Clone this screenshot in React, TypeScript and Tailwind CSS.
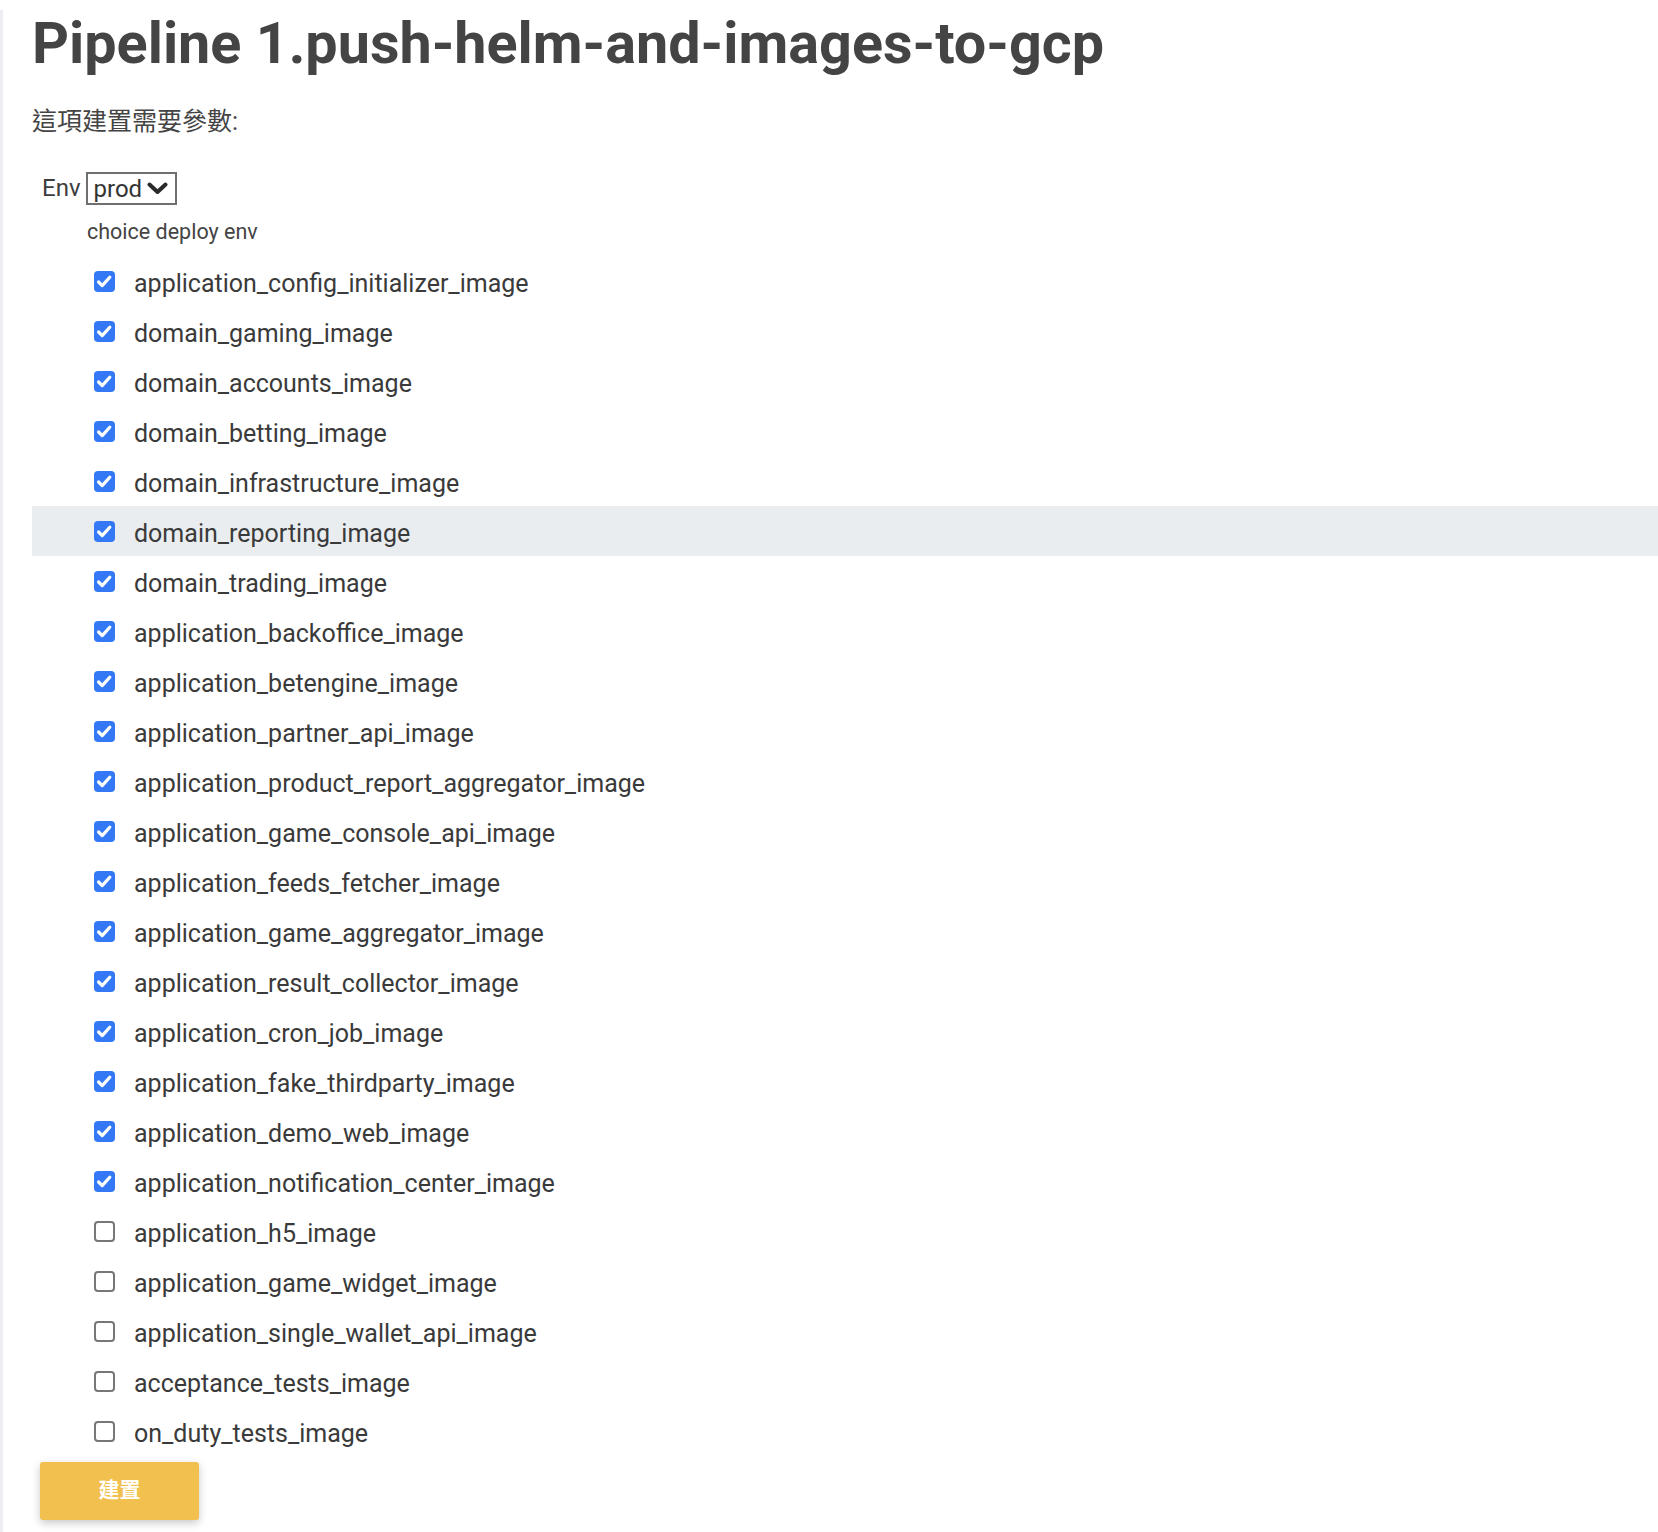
import React from 'react';

const items: { name: string; checked: boolean }[] = [
    { name: 'application_config_initializer_image', checked: true },
    { name: 'domain_gaming_image', checked: true },
    { name: 'domain_accounts_image', checked: true },
    { name: 'domain_betting_image', checked: true },
    { name: 'domain_infrastructure_image', checked: true },
    { name: 'domain_reporting_image', checked: true },
    { name: 'domain_trading_image', checked: true },
    { name: 'application_backoffice_image', checked: true },
    { name: 'application_betengine_image', checked: true },
    { name: 'application_partner_api_image', checked: true },
    { name: 'application_product_report_aggregator_image', checked: true },
    { name: 'application_game_console_api_image', checked: true },
    { name: 'application_feeds_fetcher_image', checked: true },
    { name: 'application_game_aggregator_image', checked: true },
    { name: 'application_result_collector_image', checked: true },
    { name: 'application_cron_job_image', checked: true },
    { name: 'application_fake_thirdparty_image', checked: true },
    { name: 'application_demo_web_image', checked: true },
    { name: 'application_notification_center_image', checked: true },
    { name: 'application_h5_image', checked: false },
    { name: 'application_game_widget_image', checked: false },
    { name: 'application_single_wallet_api_image', checked: false },
    { name: 'acceptance_tests_image', checked: false },
    { name: 'on_duty_tests_image', checked: false },
];

// hovered row in the screenshot
const HOVER_INDEX = 5;

const CheckBox: React.FC<{ checked: boolean }> = ({ checked }) =>
    checked ? (
        <span className="flex h-[21px] w-[21px] shrink-0 items-center justify-center rounded-[4px] bg-[#3478f6]">
            <svg width="21" height="21" viewBox="0 0 21 21" fill="none">
                <path d="M4.6 11l3.6 3.6 7.6-8.4" stroke="#fff" strokeWidth="3.2" strokeLinecap="round" strokeLinejoin="round" />
            </svg>
        </span>
    ) : (
        <span className="block h-[21px] w-[21px] shrink-0 rounded-[4px] border-2 border-[#777] bg-white" />
    );

export default function App() {
    return (
        <div className="min-h-[1532px] w-full border-l-[3px] border-[#eceef1] bg-white pl-[29px] text-[#3d3d3d] [font-family:Roboto,'Noto_Sans_CJK_TC',sans-serif]">
            <h1 className="mt-[10px] text-[57.5px] font-bold leading-[68px] text-[#444]">
                Pipeline 1.push-helm-and-images-to-gcp
            </h1>

            <p className="mt-[28px] text-[25px] leading-[32px] text-[#444]">這項建置需要參數:</p>

            {/* Env choice */}
            <div className="mt-[34px] flex items-center pl-[10px]">
                <span className="text-[24px] leading-[33px]">Env</span>
                <div className="ml-[5px] flex h-[33px] w-[91px] items-center gap-[4px] border-2 border-[#6f6f6f] pl-[6px]">
                    <span className="text-[24px] leading-[28px] text-[#333]">prod</span>
                    <svg width="23" height="13" viewBox="0 0 23 13" fill="none">
                        <path d="M3.5 2.5l8 7.5 8-7.5" stroke="#2a2a2a" strokeWidth="4" strokeLinecap="round" strokeLinejoin="round" />
                    </svg>
                </div>
            </div>
            <p className="mt-[13px] pl-[55px] text-[21.5px] leading-[28px] text-[#444]">choice deploy env</p>

            {/* Image checkboxes */}
            <div className="mt-[10px] flex flex-col">
                {items.map((item, idx) => (
                    <label
                        key={item.name}
                        className={`flex h-[50px] items-center gap-[19px] pl-[62px] ${idx === HOVER_INDEX ? 'bg-[#e9edf0]' : ''}`}
                    >
                        <CheckBox checked={item.checked} />
                        <span className="pt-[5px] text-[25px] leading-[30px] text-[#3a3a3a]">{item.name}</span>
                    </label>
                ))}
            </div>

            <button className="ml-[8px] mt-[6px] flex h-[58px] w-[159px] items-center justify-center rounded-[3px] bg-[#f2c04f] text-[21px] font-bold text-white shadow-[0_3px_8px_rgba(0,0,0,0.22)]">
                建置
            </button>
        </div>
    );
}
